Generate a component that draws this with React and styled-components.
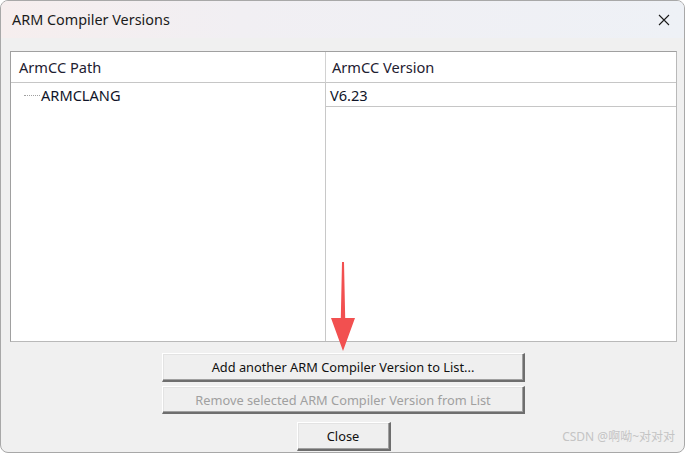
import styled, { createGlobalStyle } from 'styled-components';

const GlobalStyle = createGlobalStyle`
	html, body {
		margin: 0;
		padding: 0;
		background: #ffffff;
	}
	* {
		box-sizing: border-box;
	}
`;

const Window = styled.div`
	width: 685px;
	height: 453px;
	display: flex;
	flex-direction: column;
	background: #f0f0f0;
	border: 1px solid #a8a8a8;
	border-radius: 8px;
	overflow: hidden;
	font-family: 'Noto Sans', 'Open Sans', sans-serif;
	position: relative;
`;

const TitleBar = styled.div`
	height: 37px;
	flex: none;
	display: flex;
	align-items: center;
	justify-content: space-between;
	padding: 0 9px 0 11px;
	background: linear-gradient(90deg, #f6eeee 0%, #f1eff3 35%, #eef1f6 100%);
`;

const Title = styled.div`
	font-size: 14.4px;
	color: #1b1b1b;
`;

const CloseX = styled.div`
	width: 22px;
	height: 22px;
	display: flex;
	align-items: center;
	justify-content: center;
`;

const Body = styled.div`
	flex: 1;
	display: flex;
	flex-direction: column;
	padding: 13px 7px 0 9px;
`;

const ListView = styled.div`
	height: 291px;
	background: #ffffff;
	border: 1px solid #b9b9b9;
	border-top-color: #a0a0a0;
	border-left-color: #a0a0a0;
	display: grid;
	grid-template-columns: 315px 1fr;
	grid-template-rows: 31px 1fr;
`;

const HeaderCell = styled.div`
	display: flex;
	align-items: center;
	padding-left: ${(p) => p.$pad}px;
	font-size: 14.6px;
	color: #1e2030;
	border-bottom: 1px solid #c6c6c6;
	border-right: ${(p) => (p.$divider ? '1px solid #d2d2d2' : 'none')};
`;

const Column = styled.div`
	border-right: ${(p) => (p.$divider ? '1px solid #c8c8c8' : 'none')};
`;

const Row = styled.div`
	height: 24px;
	display: flex;
	align-items: center;
	padding-left: ${(p) => p.$pad}px;
	font-size: 14.6px;
	color: #101428;
	border-bottom: ${(p) => (p.$lined ? '1px solid #c6c6c6' : 'none')};
`;

const TreeDots = styled.span`
	width: 16px;
	margin-right: 1px;
	border-top: 1px dotted #a0a0a0;
	align-self: center;
	margin-top: 1px;
`;

const Buttons = styled.div`
	display: flex;
	flex-direction: column;
	align-items: center;
	gap: 4px;
	padding-top: 11px;
`;

const Button = styled.div`
	width: ${(p) => p.$w}px;
	height: ${(p) => p.$h || 29}px;
	margin-top: ${(p) => p.$mt || 0}px;
	display: flex;
	align-items: center;
	justify-content: center;
	background: #efefef;
	font-size: 12.8px;
	color: ${(p) => (p.$disabled ? '#a0a0a0' : '#111111')};
	border-top: 1px solid #ffffff;
	border-left: 1px solid #ffffff;
	border-right: 2px solid #6e6e6e;
	border-bottom: 2px solid #6e6e6e;
	box-shadow: inset -1px -1px 0 #a0a0a0, inset 1px 1px 0 #e3e3e3;
`;

const Arrow = styled.svg`
	position: absolute;
	left: 328px;
	top: 261px;
`;

const Watermark = styled.div`
	position: absolute;
	right: 9px;
	bottom: 7px;
	font-size: 12px;
	color: #c4c4c4;
	font-family: 'Noto Sans', 'Noto Sans CJK SC', sans-serif;
`;

function App() {
	return (
		<>
			<GlobalStyle />
			<Window>
				<TitleBar>
					<Title>ARM Compiler Versions</Title>
					<CloseX>
						<svg width="12" height="12" viewBox="0 0 12 12">
							<path d="M1 1 L11 11 M11 1 L1 11" stroke="#1b1b1b" strokeWidth="1.1" />
						</svg>
					</CloseX>
				</TitleBar>
				<Body>
					<ListView>
						<HeaderCell $pad={8} $divider>
							ArmCC Path
						</HeaderCell>
						<HeaderCell $pad={6}>ArmCC Version</HeaderCell>
						<Column $divider>
							<Row $pad={13}>
								<TreeDots />
								ARMCLANG
							</Row>
						</Column>
						<Column>
							<Row $pad={4} $lined>
								V6.23
							</Row>
						</Column>
					</ListView>
					<Buttons>
						<Button $w={363}>Add another ARM Compiler Version to List...</Button>
						<Button $w={363} $h={28} $disabled>
							Remove selected ARM Compiler Version from List
						</Button>
						<Button $w={94} $mt={4}>
							Close
						</Button>
					</Buttons>
				</Body>
				<Arrow width="28" height="90" viewBox="0 0 28 90">
					<path d="M13 0 L15 0 L16.2 56 L26 56 L14 89 L2 56 L11.8 56 Z" fill="#f25050" />
				</Arrow>
				<Watermark>CSDN @啊呦~对对对</Watermark>
			</Window>
		</>
	);
}

export default App;
